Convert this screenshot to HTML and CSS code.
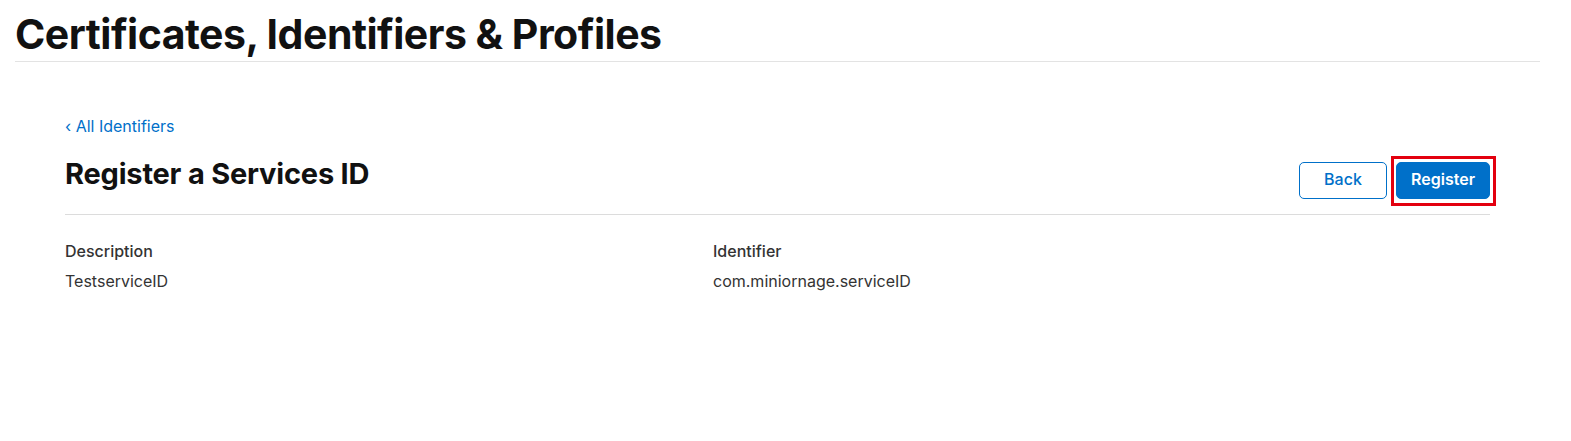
FILE: index.html
```html
<!DOCTYPE html>
<html lang="en">
<head>
<meta charset="utf-8">
<title>Certificates, Identifiers &amp; Profiles</title>
<link rel="stylesheet" href="styles.css">
</head>
<body>
<div class="page">
  <header class="top">
    <h1 class="top-title">Certificates, Identifiers &amp; Profiles</h1>
  </header>
  <main class="content">
    <a class="back-link" href="#"><span class="chev">‹</span> All Identifiers</a>
    <div class="head-row">
      <h2 class="head-title">Register a Services ID</h2>
      <div class="actions">
        <button class="btn btn-secondary">Back</button>
        <span class="highlight"><button class="btn btn-primary">Register</button></span>
      </div>
    </div>
    <div class="fields">
      <div class="field">
        <div class="label">Description</div>
        <div class="value">TestserviceID</div>
      </div>
      <div class="field">
        <div class="label">Identifier</div>
        <div class="value">com.miniornage.serviceID</div>
      </div>
    </div>
  </main>
</div>
</body>
</html>
```

FILE: styles.css
```css
* { box-sizing: border-box; }
html, body { margin: 0; padding: 0; background: #fff; }
body {
  font-family: Inter, "Liberation Sans", sans-serif;
  color: #333;
  -webkit-font-smoothing: antialiased;
}
.page {
  width: 1525px;
  margin-left: 15px;
}
.top {
  border-bottom: 1px solid #e3e3e3;
  padding-top: 13px;
  padding-bottom: 5px;
}
.top-title {
  margin: 0;
  font-size: 41px;
  line-height: 43px;
  font-weight: 700;
  color: #111;
  letter-spacing: -0.5px;
}
.content {
  padding: 54px 50px 0 50px;
}
.back-link {
  display: inline-block;
  font-size: 16px;
  line-height: 20px;
  color: #0070c9;
  text-decoration: none;
}
.head-row {
  display: flex;
  justify-content: space-between;
  align-items: flex-start;
  margin-top: 26px;
  padding-bottom: 15px;
  border-bottom: 1px solid #dcdcdc;
}
.head-title {
  margin: 0;
  font-size: 29px;
  line-height: 24px;
  font-weight: 700;
  color: #111;
  letter-spacing: -0.2px;
}
.actions {
  display: flex;
  gap: 9px;
}
.highlight {
  position: relative;
  display: flex;
}
.highlight::after {
  content: "";
  position: absolute;
  left: -5px;
  right: -6px;
  top: -6px;
  bottom: -7px;
  border: 3px solid #e3000f;
  pointer-events: none;
}
.btn {
  font-family: inherit;
  font-size: 16px;
  font-weight: 500;
  height: 37px;
  border-radius: 5px;
  cursor: pointer;
  padding: 0 0 3px 0;
}
.btn-secondary {
  width: 88px;
  background: #fff;
  color: #0070c9;
  border: 1px solid #0070c9;
}
.btn-primary {
  width: 94px;
  background: #0070c9;
  color: #fff;
  border: 1px solid #0070c9;
  font-weight: 600;
}
.fields {
  display: grid;
  grid-template-columns: 648px 1fr;
  padding-top: 26px;
}
.label {
  font-size: 16px;
  font-weight: 500;
  line-height: 20px;
  color: #333;
}
.value {
  font-size: 16px;
  line-height: 20px;
  margin-top: 10px;
  color: #333;
}
```
